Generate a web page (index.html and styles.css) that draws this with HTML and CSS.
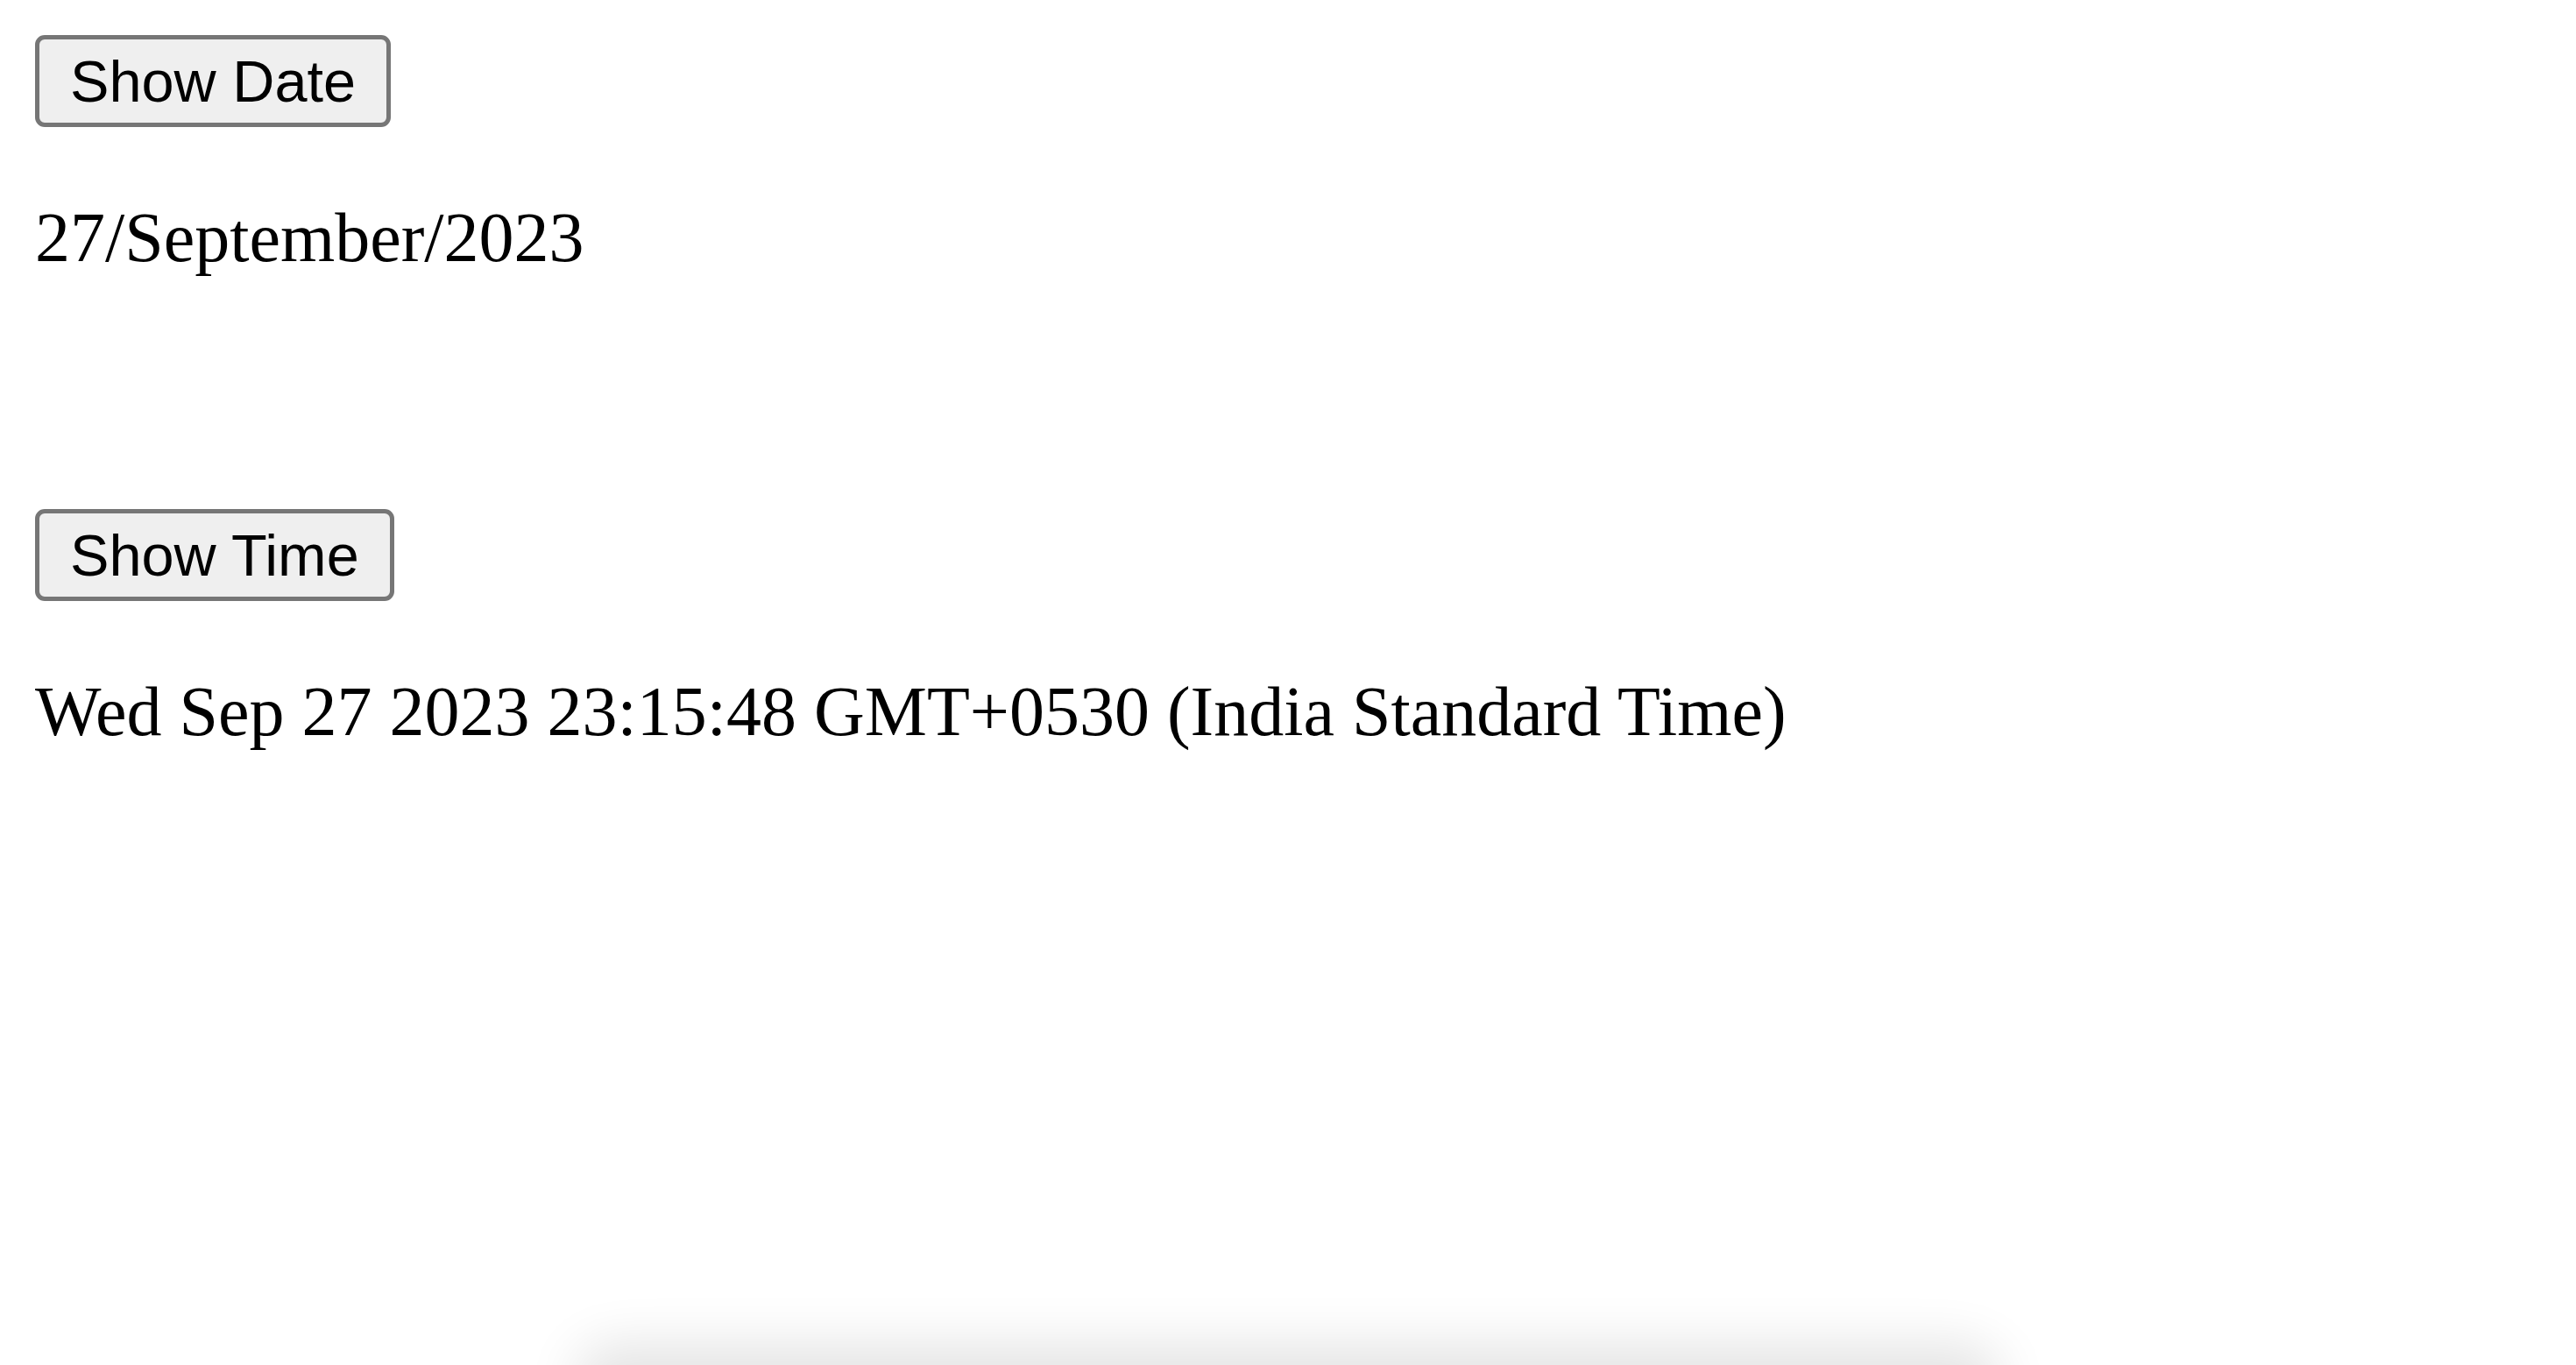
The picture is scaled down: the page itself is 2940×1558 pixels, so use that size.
FILE: index.html
```html
<!DOCTYPE html>
<html lang="en">
<head>
<meta charset="utf-8">
<title>Date and Time</title>
<link rel="stylesheet" href="styles.css">
</head>
<body>
<button class="btn" type="button">Show Date</button>
<p class="out out-date">27/September/2023</p>
<button class="btn" type="button">Show Time</button>
<p class="out">Wed Sep 27 2023 23:15:48 GMT+0530 (India Standard Time)</p>
<div class="edge-shadow"></div>
</body>
</html>
```

FILE: styles.css
```css
html, body {
  background: #ffffff;
}
body {
  margin: 40px;
  font-family: "Liberation Serif", "Times New Roman", serif;
  font-size: 80px;
  line-height: 92px;
  color: #000;
  overflow: hidden;
}
.btn {
  display: block;
  box-sizing: border-box;
  height: 105px;
  margin: 0;
  padding: 0 35px;
  border: 5px solid #767676;
  border-radius: 11px;
  background: #efefef;
  color: #000;
  font-family: "Liberation Sans", Arial, sans-serif;
  font-size: 66.67px;
  line-height: 76px;
}
.out {
  margin: 80px 0;
  white-space: nowrap;
}
.out-date {
  margin-bottom: 264px;
}
.edge-shadow {
  position: fixed;
  left: 680px;
  width: 1580px;
  bottom: -40px;
  height: 40px;
  border-radius: 40px;
  background: #e0e0e0;
  box-shadow: 0 0 60px 24px rgba(0, 0, 0, 0.11);
}
```
